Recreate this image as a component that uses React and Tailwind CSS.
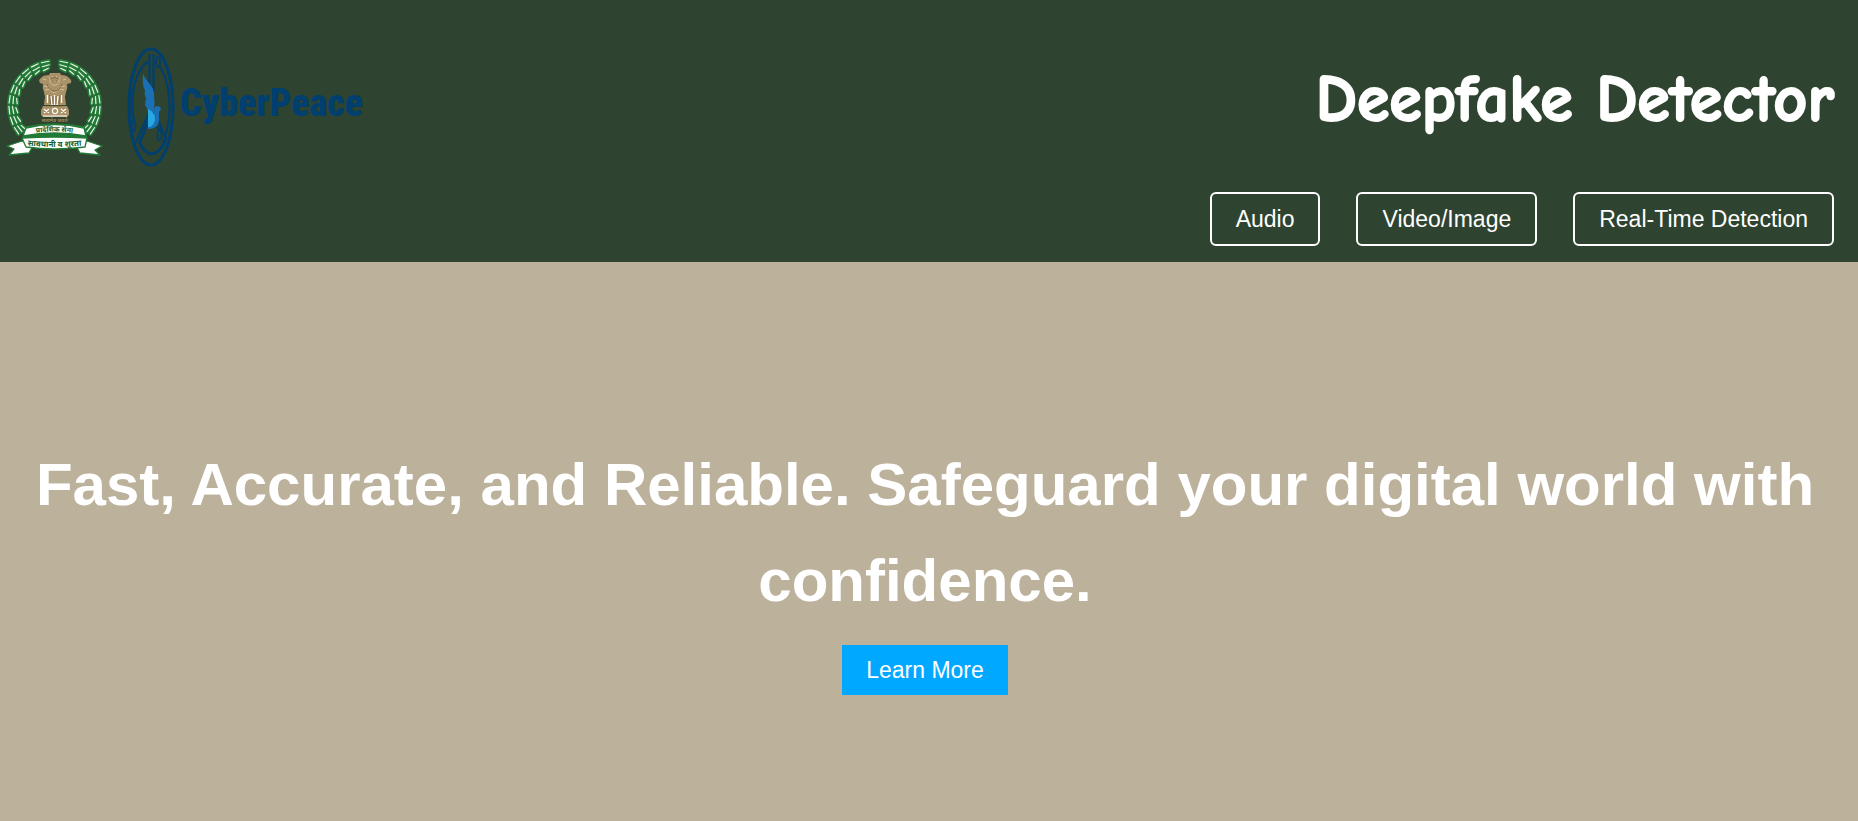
const NAV_ITEMS = ["Audio", "Video/Image", "Real-Time Detection"];

const LEAF_ANGLES = [4, 18, 32, 46, 60, 74, 88, 102, 116];

const LEAF_LINES = "M52 11 44.500 12M52 14.500 45 16M51 18 46 20";

function WreathSide() {
  return (
    <g fill="none" strokeLinecap="round">
      {LEAF_ANGLES.map((a) => (
        <g key={a} transform={`rotate(${-a} 54 56)`}>
          <path d={LEAF_LINES} stroke="#227a36" strokeWidth="4.400" />
          <path d={LEAF_LINES} stroke="#e9f2e8" strokeWidth="1.200" />
        </g>
      ))}
    </g>
  );
}

function ArmyEmblem() {
  return (
    <svg viewBox="0 0 110 115" className="h-[115px] w-[110px] shrink-0" role="img" aria-label="प्रादेशिक सेना">
      <WreathSide />
      <g transform="matrix(-1 0 0 1 109 0)">
        <WreathSide />
      </g>
      <g fill="#a99168">
        <path d="M41 28q2-3 8-3l1-2h10l1 2q6 0 8 3 3 2 2 5l-4 1q1 4-1 8l-1 5 1 8H44l1-8-1-5q-2-4-1-8l-3-1q-2-3 1-5Z" />
        <path d="M43 56h24l2 4v5l-2 2H43l-2-2v-5Z" />
      </g>
      <g fill="none" stroke="#d9cba9" strokeWidth=".8">
        <path d="M49 27q2 2 1 6m10-6q-2 2-1 6M52 26l1 1m3 0 1-1M51 34q3.500 3 7 0M43 29l3 1m20-1-3 1M44 36l5 1m16-1-5 1M45 40l5-1m14 1-5-1M50 40l4 3 4-3" />
      </g>
      <g fill="none" stroke="#fff" strokeWidth="1.300">
        <path d="M47.500 45v8M51 46l1 9M54.500 45v10M58 46l-1 9M61.500 45v8" />
      </g>
      <path d="M50 29q4-3 9 0M47 34q2 7 7.500 7T62 34M52 31h1m3 0h1M46 56h17M49.500 45l1 9M53 46v8m3-8v8m4-9-1 9" fill="none" stroke="#705c38" strokeWidth=".7" />
      <g fill="none" stroke="#fff" strokeWidth="1.100">
        <circle cx="55" cy="61" r="2.600" />
        <path d="M44 59l5 4m0-4-5 4m17 0 5-4m-5 0 5 4M43 66h24" />
      </g>
      <text x="54.500" y="72" textAnchor="middle" fill="#a08255" fontSize="5" fontWeight="700" fontFamily="'Noto Sans', 'Noto Sans Devanagari', sans-serif">सत्यमेव जयते</text>
      <g fill="#fff" stroke="#227a36" strokeWidth="1.300" strokeLinejoin="round">
        <path d="M22 91 7 96l7 3-5 6 20-2 4-7Z" />
        <path d="M87 91l15 5-7 4 5 5-20-2-4-7Z" />
        <path d="M23 88 26 77Q54 71 84 77l3 11Z" fill="#227a36" />
        <path d="M26 78Q54.500 71 84 78l2 8Q54.500 80 23 86Z" />
        <path d="M22 88Q54 86 87 88l-2 9Q54.500 101 26 97Z" />
      </g>
      <path id="ribbon-top" d="M28 84Q54.500 79 81 84" fill="none" />
      <path id="ribbon-low" d="M24 95Q54.500 99 85 95" fill="none" />
      <g fill="#14602b" fontWeight="700" textAnchor="middle" fontFamily="'Noto Sans', 'Noto Sans Devanagari', sans-serif">
        <text fontSize="7">
          <textPath href="#ribbon-top" startOffset="50%">प्रादेशिक सेना</textPath>
        </text>
        <text fontSize="8">
          <textPath href="#ribbon-low" startOffset="50%">सावधानी व शूरता</textPath>
        </text>
      </g>
    </svg>
  );
}

function CyberPeaceMark() {
  return (
    <svg viewBox="0 0 50 122" className="h-[122px] w-[50px] shrink-0" aria-hidden="true">
      <g fill="none" stroke="#003f6e">
        <ellipse cx="25" cy="61" rx="22" ry="58" strokeWidth="3.200" />
        <g strokeWidth="2.200">
          <path d="M23.500 8v58L9 97" />
          <path d="M27.500 8v38" />
          <path d="M23 15C10 22 5 46 6.500 66l1.500 9" />
          <path d="M34 21C44 36 47 66 39 91L30 69" />
          <path d="M22 75 13.500 97Q25 118 37 99l3-8" strokeWidth="3" />
          <path d="M29 77l4 7" />
          <ellipse cx="32" cy="16" rx="2" ry="5" strokeWidth="1.800" />
          <ellipse cx="7.500" cy="80" rx="1.800" ry="5" strokeWidth="1.800" />
          <ellipse cx="33.500" cy="89" rx="2" ry="5" strokeWidth="1.800" />
        </g>
      </g>
      <path d="M17 28q2 5 6 9 5 6 5 11 1 9 0 18l-6 4q1-6-3-11l1-7q-2-3-1-8-3-4-2-16Z" fill="#1b70b5" />
      <path d="M28 66q0-6 3-6 3 0 4 3l-2 3v9q-1 8-11 8v-2l6-4Z" fill="#1b70b5" />
      <path d="M22 63q7 3 7 10 0 5-5 8h-2Z" fill="#27a8e0" />
    </svg>
  );
}

export default function App() {
  return (
    <div className="flex min-h-screen flex-col bg-[#bcb19a] font-['Liberation_Sans',Arial,sans-serif] text-white">
      <header className="flex items-start justify-between bg-[#2e4430] pr-6 pb-4">
        <div className="flex items-center gap-4 pt-[46px]">
          <ArmyEmblem />
          <div className="flex items-center gap-1 text-[#003f6e]">
            <CyberPeaceMark />
            <span className="pb-2 text-[38px] leading-none font-black font-['Roboto_Condensed','Open_Sans_Condensed',Lato,sans-serif]">CyberPeace</span>
          </div>
        </div>
        <div className="flex flex-col items-end gap-11 pt-13">
          <h1 className="text-[66px] leading-[96px] font-bold [-webkit-text-stroke:2px_white] font-['Comic_Sans_MS','Comic_Neue',cursive]">Deepfake Detector</h1>
          <nav className="flex gap-9">
            {NAV_ITEMS.map((label) => (
              <a key={label} href="#" className="rounded-md border-2 border-white px-6 py-[7px] text-[23px] leading-9">
                {label}
              </a>
            ))}
          </nav>
        </div>
      </header>
      <main className="flex grow flex-col items-center justify-center pt-12 pr-2 text-center">
        <h2 className="px-4 text-[60px] leading-[96px] font-bold">
          Fast, Accurate, and Reliable. Safeguard your digital world with confidence.
        </h2>
        <button type="button" className="mt-4 bg-[#00a8ff] px-6 py-[7px] text-[23px] leading-9">
          Learn More
        </button>
      </main>
    </div>
  );
}
